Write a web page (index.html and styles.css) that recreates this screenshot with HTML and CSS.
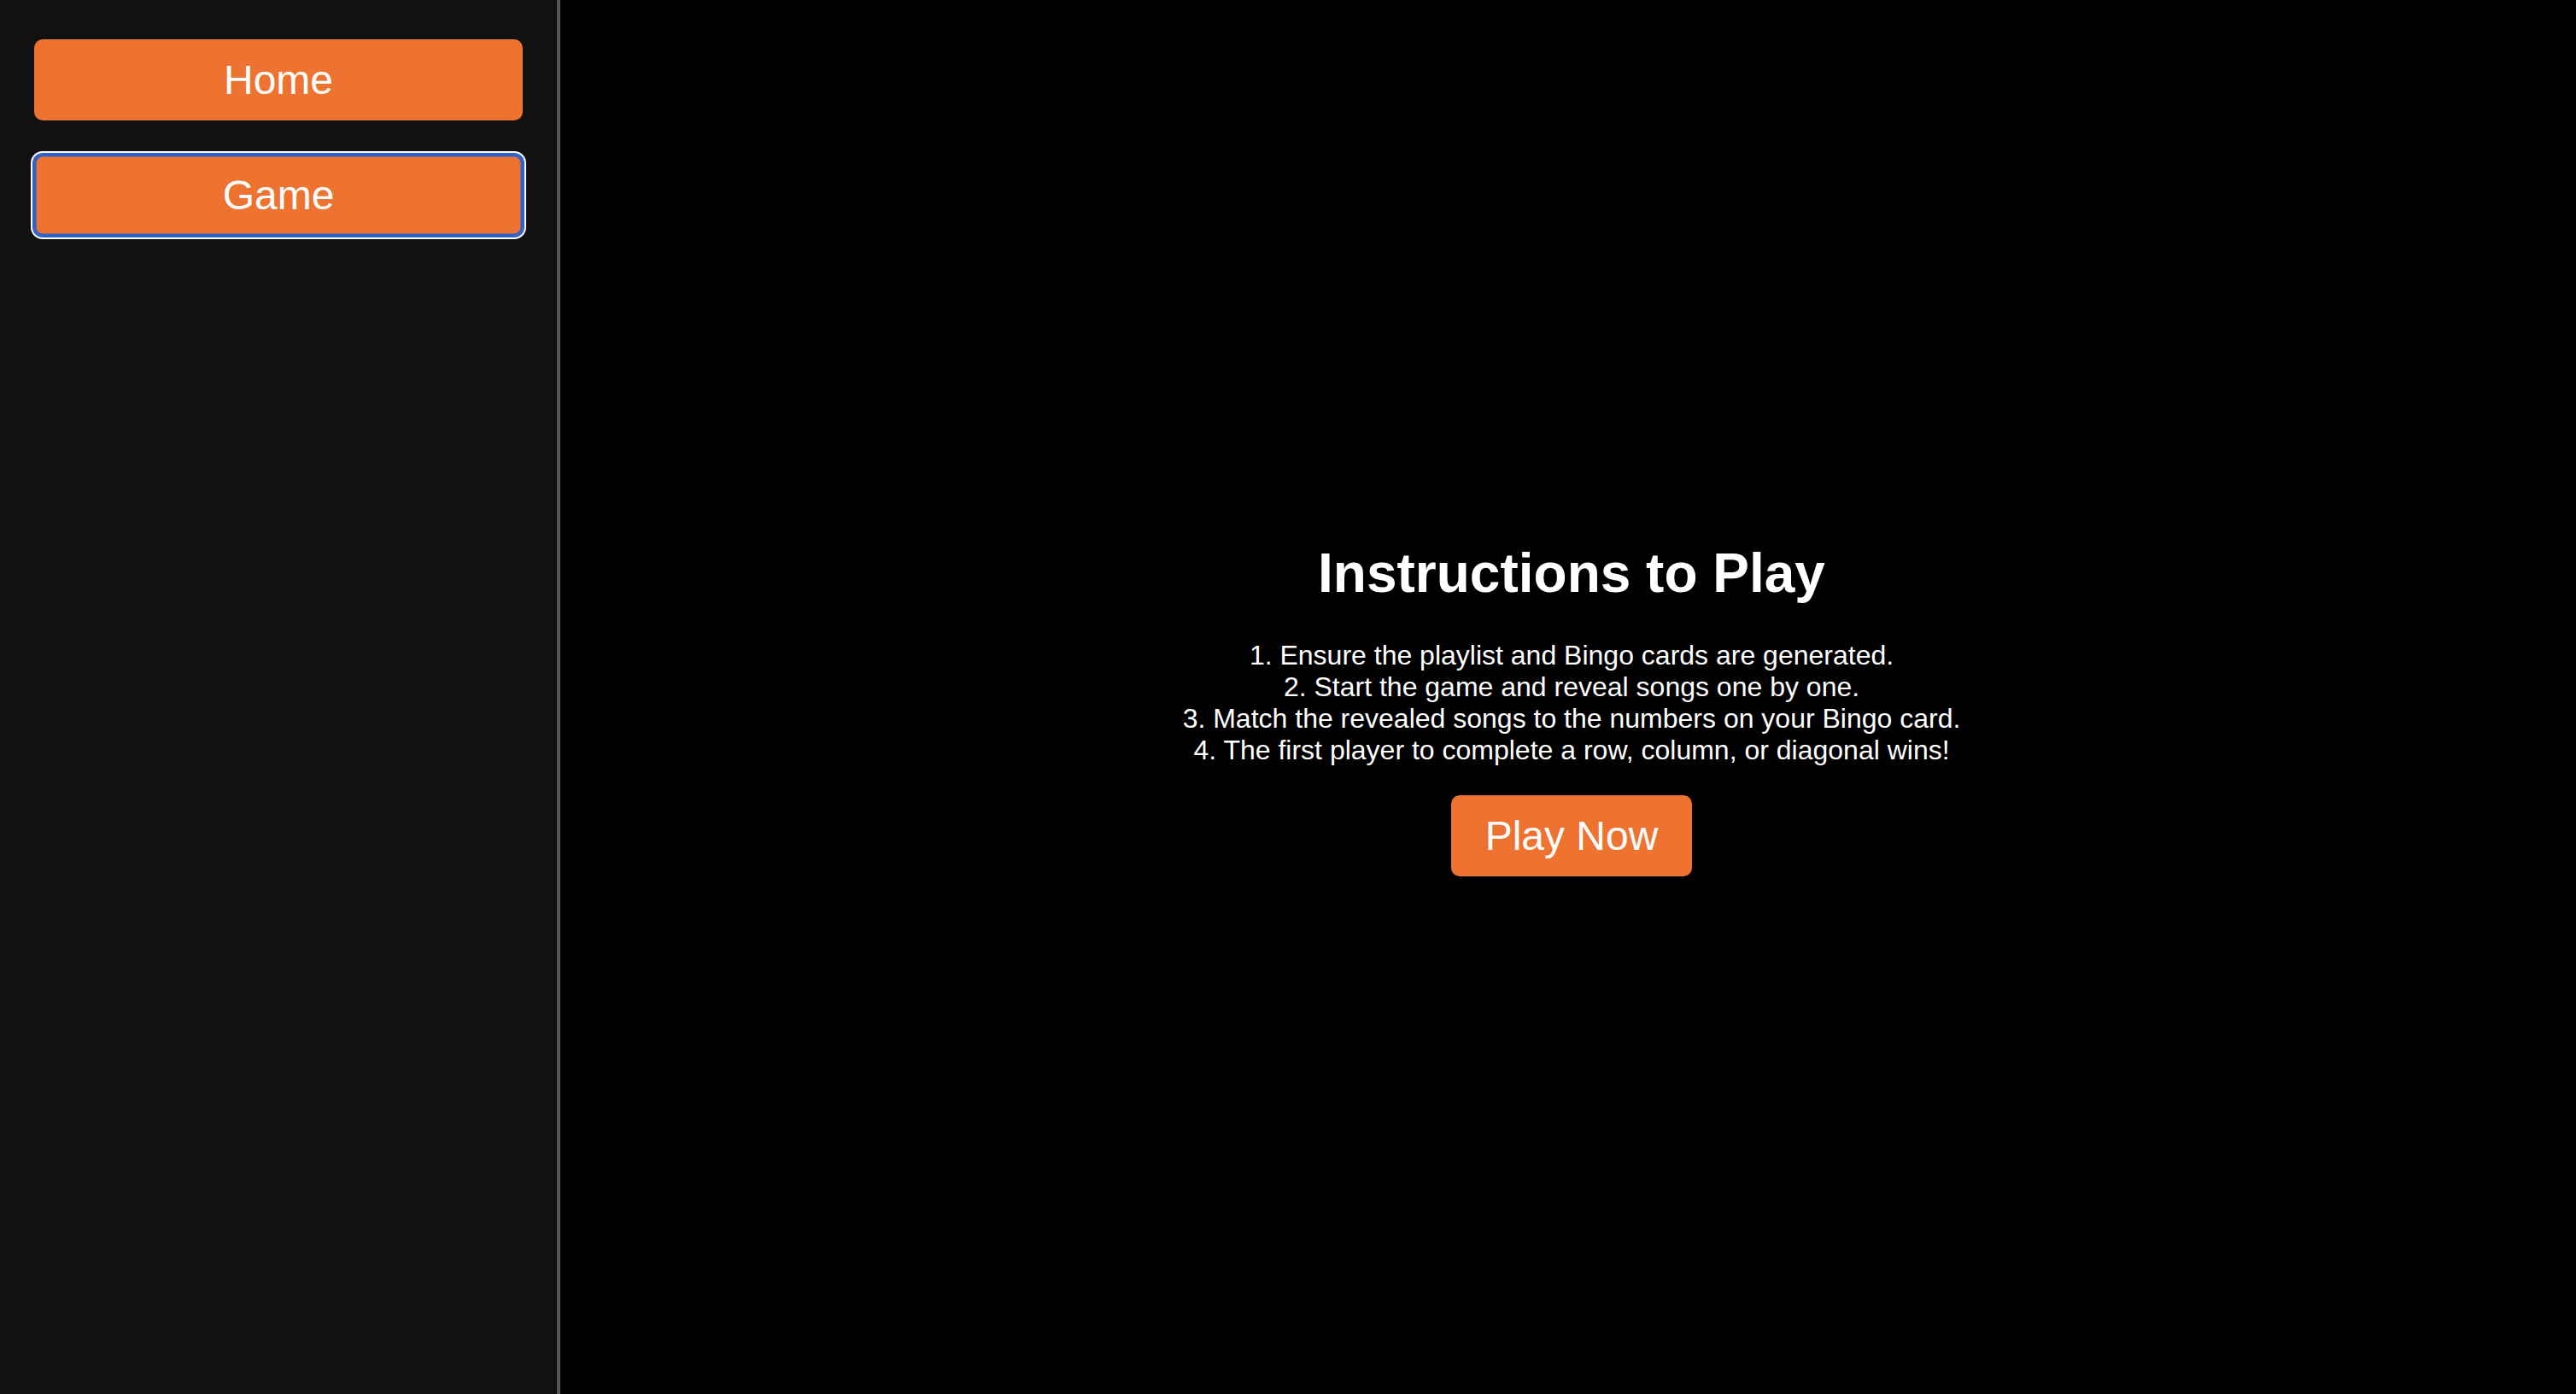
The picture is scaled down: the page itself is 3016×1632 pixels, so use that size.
FILE: index.html
```html
<!DOCTYPE html>
<html lang="en">
<head>
<meta charset="utf-8">
<title>Bingo</title>
<link rel="stylesheet" href="styles.css">
</head>
<body>
<div class="app">
  <nav class="sidebar">
    <button class="nav-btn">Home</button>
    <button class="nav-btn nav-btn--focused">Game</button>
  </nav>
  <main class="main">
    <section class="instructions">
      <h1 class="title">Instructions to Play</h1>
      <p class="steps">
        1. Ensure the playlist and Bingo cards are generated.<br>
        2. Start the game and reveal songs one by one.<br>
        3. Match the revealed songs to the numbers on your Bingo card.<br>
        4. The first player to complete a row, column, or diagonal wins!
      </p>
      <button class="play-btn">Play Now</button>
    </section>
  </main>
</div>
</body>
</html>
```

FILE: styles.css
```css
html, body {
  margin: 0;
  padding: 0;
  height: 100%;
  background: #000;
  font-family: "Liberation Sans", Arial, sans-serif;
  color: #fff;
}

.app {
  display: flex;
  height: 100vh;
}

.sidebar {
  width: 572px;
  padding: 46px 40px;
  background: #111111;
  border-right: 4px solid #5a5550;
  display: flex;
  flex-direction: column;
  gap: 40px;
  flex-shrink: 0;
}

.nav-btn {
  display: block;
  width: 100%;
  padding: 20px 0;
  border: none;
  border-radius: 10px;
  background: #ee7230;
  color: #fff;
  font-family: "Liberation Sans", Arial, sans-serif;
  font-size: 48px;
  line-height: normal;
  cursor: pointer;
}

.nav-btn--focused {
  box-shadow: inset 0 0 0 2.5px #2b62cc, 0 0 0 2px #2b62cc, 0 0 0 4px #ffffff;
}

.main {
  flex: 1;
  display: flex;
  align-items: center;
  justify-content: center;
  padding: 27px 0 0 8px;
  background: #000;
}

.instructions {
  display: flex;
  flex-direction: column;
  align-items: center;
  text-align: center;
}

.title {
  margin: 0 0 41px;
  font-size: 64px;
  font-weight: bold;
  line-height: normal;
}

.steps {
  margin: 0 0 34px;
  font-size: 32px;
  line-height: normal;
}

.play-btn {
  padding: 20px 40px;
  border: none;
  border-radius: 10px;
  background: #ee7230;
  color: #fff;
  font-family: "Liberation Sans", Arial, sans-serif;
  font-size: 48px;
  line-height: normal;
  cursor: pointer;
}
```
